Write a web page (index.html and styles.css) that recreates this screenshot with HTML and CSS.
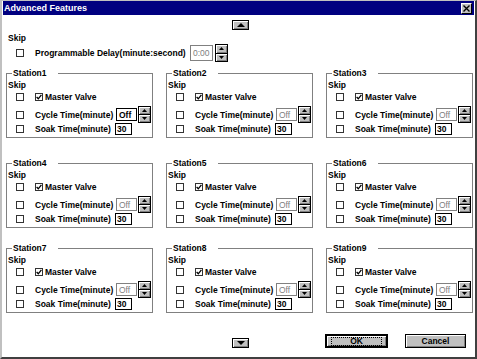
FILE: index.html
```html
<!DOCTYPE html>
<html>
<head>
<meta charset="utf-8">
<title>Advanced Features</title>
<link rel="stylesheet" href="styles.css">
</head>
<body>
<div class="window">
  <div class="titlebar">
    <span class="title">Advanced Features</span>
    <span class="close"><svg width="7" height="7" viewBox="0 0 7 7"><path d="M0.5 0.5L6.5 6.5M6.5 0.5L0.5 6.5" stroke="#000" stroke-width="1.4" fill="none"/></svg></span>
  </div>
  <div class="client">
    <div class="scroll-row">
      <span class="arrow-btn"><svg width="8" height="4" viewBox="0 0 8 4"><path d="M0 4H8L4 0Z" fill="#000"/></svg></span>
    </div>
    <div class="delay">
      <div class="skip">Skip</div>
      <div class="delay-row">
        <span class="cb"></span>
        <span class="delay-label">Programmable Delay(minute:second)</span>
        <span class="field field-delay disabled">0:00</span>
        <span class="spin spin-delay">
          <span class="spin-btn"><svg width="5" height="3" viewBox="0 0 5 3"><path d="M0 3H5L2.5 0Z" fill="#000"/></svg></span>
          <span class="spin-btn"><svg width="5" height="3" viewBox="0 0 5 3"><path d="M0 0H5L2.5 3Z" fill="#000"/></svg></span>
        </span>
      </div>
    </div>

    <div class="stations">
      <div class="station-row first">
        <fieldset class="station">
          <legend>Station1</legend>
          <div class="skip">Skip</div>
          <div class="srow r1"><span class="cb"></span><span class="cb checked"><svg width="6" height="6" viewBox="0 0 6 6"><path d="M0.6 3L2.3 4.8L5.4 0.8" stroke="#000" stroke-width="1.3" fill="none"/></svg></span><span class="mv">Master Valve</span></div>
          <div class="srow r2"><span class="cb"></span><span class="lbl-cycle">Cycle Time(minute)</span><span class="field field-off">Off</span><span class="spin"><span class="spin-btn"><svg width="5" height="3" viewBox="0 0 5 3"><path d="M0 3H5L2.5 0Z" fill="#000"/></svg></span><span class="spin-btn"><svg width="5" height="3" viewBox="0 0 5 3"><path d="M0 0H5L2.5 3Z" fill="#000"/></svg></span></span></div>
          <div class="srow r3"><span class="cb"></span><span class="lbl-soak">Soak Time(minute)</span><span class="field field-soak">30</span></div>
        </fieldset>
        <fieldset class="station">
          <legend>Station2</legend>
          <div class="skip">Skip</div>
          <div class="srow r1"><span class="cb"></span><span class="cb checked"><svg width="6" height="6" viewBox="0 0 6 6"><path d="M0.6 3L2.3 4.8L5.4 0.8" stroke="#000" stroke-width="1.3" fill="none"/></svg></span><span class="mv">Master Valve</span></div>
          <div class="srow r2"><span class="cb"></span><span class="lbl-cycle">Cycle Time(minute)</span><span class="field field-off disabled">Off</span><span class="spin"><span class="spin-btn"><svg width="5" height="3" viewBox="0 0 5 3"><path d="M0 3H5L2.5 0Z" fill="#000"/></svg></span><span class="spin-btn"><svg width="5" height="3" viewBox="0 0 5 3"><path d="M0 0H5L2.5 3Z" fill="#000"/></svg></span></span></div>
          <div class="srow r3"><span class="cb"></span><span class="lbl-soak">Soak Time(minute)</span><span class="field field-soak">30</span></div>
        </fieldset>
        <fieldset class="station">
          <legend>Station3</legend>
          <div class="skip">Skip</div>
          <div class="srow r1"><span class="cb"></span><span class="cb checked"><svg width="6" height="6" viewBox="0 0 6 6"><path d="M0.6 3L2.3 4.8L5.4 0.8" stroke="#000" stroke-width="1.3" fill="none"/></svg></span><span class="mv">Master Valve</span></div>
          <div class="srow r2"><span class="cb"></span><span class="lbl-cycle">Cycle Time(minute)</span><span class="field field-off disabled">Off</span><span class="spin"><span class="spin-btn"><svg width="5" height="3" viewBox="0 0 5 3"><path d="M0 3H5L2.5 0Z" fill="#000"/></svg></span><span class="spin-btn"><svg width="5" height="3" viewBox="0 0 5 3"><path d="M0 0H5L2.5 3Z" fill="#000"/></svg></span></span></div>
          <div class="srow r3"><span class="cb"></span><span class="lbl-soak">Soak Time(minute)</span><span class="field field-soak">30</span></div>
        </fieldset>
      </div>

      <div class="station-row second">
        <fieldset class="station">
          <legend>Station4</legend>
          <div class="skip">Skip</div>
          <div class="srow r1"><span class="cb"></span><span class="cb checked"><svg width="6" height="6" viewBox="0 0 6 6"><path d="M0.6 3L2.3 4.8L5.4 0.8" stroke="#000" stroke-width="1.3" fill="none"/></svg></span><span class="mv">Master Valve</span></div>
          <div class="srow r2"><span class="cb"></span><span class="lbl-cycle">Cycle Time(minute)</span><span class="field field-off disabled">Off</span><span class="spin"><span class="spin-btn"><svg width="5" height="3" viewBox="0 0 5 3"><path d="M0 3H5L2.5 0Z" fill="#000"/></svg></span><span class="spin-btn"><svg width="5" height="3" viewBox="0 0 5 3"><path d="M0 0H5L2.5 3Z" fill="#000"/></svg></span></span></div>
          <div class="srow r3"><span class="cb"></span><span class="lbl-soak">Soak Time(minute)</span><span class="field field-soak">30</span></div>
        </fieldset>
        <fieldset class="station">
          <legend>Station5</legend>
          <div class="skip">Skip</div>
          <div class="srow r1"><span class="cb"></span><span class="cb checked"><svg width="6" height="6" viewBox="0 0 6 6"><path d="M0.6 3L2.3 4.8L5.4 0.8" stroke="#000" stroke-width="1.3" fill="none"/></svg></span><span class="mv">Master Valve</span></div>
          <div class="srow r2"><span class="cb"></span><span class="lbl-cycle">Cycle Time(minute)</span><span class="field field-off disabled">Off</span><span class="spin"><span class="spin-btn"><svg width="5" height="3" viewBox="0 0 5 3"><path d="M0 3H5L2.5 0Z" fill="#000"/></svg></span><span class="spin-btn"><svg width="5" height="3" viewBox="0 0 5 3"><path d="M0 0H5L2.5 3Z" fill="#000"/></svg></span></span></div>
          <div class="srow r3"><span class="cb"></span><span class="lbl-soak">Soak Time(minute)</span><span class="field field-soak">30</span></div>
        </fieldset>
        <fieldset class="station">
          <legend>Station6</legend>
          <div class="skip">Skip</div>
          <div class="srow r1"><span class="cb"></span><span class="cb checked"><svg width="6" height="6" viewBox="0 0 6 6"><path d="M0.6 3L2.3 4.8L5.4 0.8" stroke="#000" stroke-width="1.3" fill="none"/></svg></span><span class="mv">Master Valve</span></div>
          <div class="srow r2"><span class="cb"></span><span class="lbl-cycle">Cycle Time(minute)</span><span class="field field-off disabled">Off</span><span class="spin"><span class="spin-btn"><svg width="5" height="3" viewBox="0 0 5 3"><path d="M0 3H5L2.5 0Z" fill="#000"/></svg></span><span class="spin-btn"><svg width="5" height="3" viewBox="0 0 5 3"><path d="M0 0H5L2.5 3Z" fill="#000"/></svg></span></span></div>
          <div class="srow r3"><span class="cb"></span><span class="lbl-soak">Soak Time(minute)</span><span class="field field-soak">30</span></div>
        </fieldset>
      </div>

      <div class="station-row third">
        <fieldset class="station">
          <legend>Station7</legend>
          <div class="skip">Skip</div>
          <div class="srow r1"><span class="cb"></span><span class="cb checked"><svg width="6" height="6" viewBox="0 0 6 6"><path d="M0.6 3L2.3 4.8L5.4 0.8" stroke="#000" stroke-width="1.3" fill="none"/></svg></span><span class="mv">Master Valve</span></div>
          <div class="srow r2"><span class="cb"></span><span class="lbl-cycle">Cycle Time(minute)</span><span class="field field-off disabled">Off</span><span class="spin"><span class="spin-btn"><svg width="5" height="3" viewBox="0 0 5 3"><path d="M0 3H5L2.5 0Z" fill="#000"/></svg></span><span class="spin-btn"><svg width="5" height="3" viewBox="0 0 5 3"><path d="M0 0H5L2.5 3Z" fill="#000"/></svg></span></span></div>
          <div class="srow r3"><span class="cb"></span><span class="lbl-soak">Soak Time(minute)</span><span class="field field-soak">30</span></div>
        </fieldset>
        <fieldset class="station">
          <legend>Station8</legend>
          <div class="skip">Skip</div>
          <div class="srow r1"><span class="cb"></span><span class="cb checked"><svg width="6" height="6" viewBox="0 0 6 6"><path d="M0.6 3L2.3 4.8L5.4 0.8" stroke="#000" stroke-width="1.3" fill="none"/></svg></span><span class="mv">Master Valve</span></div>
          <div class="srow r2"><span class="cb"></span><span class="lbl-cycle">Cycle Time(minute)</span><span class="field field-off disabled">Off</span><span class="spin"><span class="spin-btn"><svg width="5" height="3" viewBox="0 0 5 3"><path d="M0 3H5L2.5 0Z" fill="#000"/></svg></span><span class="spin-btn"><svg width="5" height="3" viewBox="0 0 5 3"><path d="M0 0H5L2.5 3Z" fill="#000"/></svg></span></span></div>
          <div class="srow r3"><span class="cb"></span><span class="lbl-soak">Soak Time(minute)</span><span class="field field-soak">30</span></div>
        </fieldset>
        <fieldset class="station">
          <legend>Station9</legend>
          <div class="skip">Skip</div>
          <div class="srow r1"><span class="cb"></span><span class="cb checked"><svg width="6" height="6" viewBox="0 0 6 6"><path d="M0.6 3L2.3 4.8L5.4 0.8" stroke="#000" stroke-width="1.3" fill="none"/></svg></span><span class="mv">Master Valve</span></div>
          <div class="srow r2"><span class="cb"></span><span class="lbl-cycle">Cycle Time(minute)</span><span class="field field-off disabled">Off</span><span class="spin"><span class="spin-btn"><svg width="5" height="3" viewBox="0 0 5 3"><path d="M0 3H5L2.5 0Z" fill="#000"/></svg></span><span class="spin-btn"><svg width="5" height="3" viewBox="0 0 5 3"><path d="M0 0H5L2.5 3Z" fill="#000"/></svg></span></span></div>
          <div class="srow r3"><span class="cb"></span><span class="lbl-soak">Soak Time(minute)</span><span class="field field-soak">30</span></div>
        </fieldset>
      </div>
    </div>

    <div class="footer">
      <span class="footer-spacer"></span>
      <span class="arrow-btn"><svg width="8" height="4" viewBox="0 0 8 4"><path d="M0 0H8L4 4Z" fill="#000"/></svg></span>
      <span class="buttons">
        <span class="btn btn-default"><span class="focus">OK</span></span>
        <span class="btn">Cancel</span>
      </span>
    </div>
  </div>
</div>
</body>
</html>
```

FILE: styles.css
```css
* { box-sizing: border-box; }
html, body { margin: 0; padding: 0; }
body {
  width: 477px;
  height: 359px;
  overflow: hidden;
  background: #fff;
  font-family: "Liberation Sans", Arial, sans-serif;
  font-size: 8.5px;
  font-weight: bold;
  color: #000;
}
.window {
  width: 477px;
  height: 359px;
  border-style: solid;
  border-width: 1px 2px 2px 2px;
  border-color: #c0c0c0 #404040 #404040 #c0c0c0;
  display: flex;
  flex-direction: column;
  background: #fff;
}
.titlebar {
  height: 14px;
  margin: 0 1px;
  background: #000080;
  color: #fff;
  display: flex;
  align-items: center;
  justify-content: space-between;
  padding: 0 2px 0 1px;
}
.title { line-height: 14px; font-size: 9px; }
.close {
  width: 11px;
  height: 11px;
  background: #c0c0c0;
  border: 1px solid;
  border-color: #fff #000 #000 #fff;
  display: flex;
  align-items: center;
  justify-content: center;
}
.close svg { display: block; }
.client {
  flex: 1;
  display: flex;
  flex-direction: column;
  padding: 5px 0 0 4px;
}
.scroll-row { display: flex; justify-content: center; }
.arrow-btn {
  width: 17px;
  height: 10px;
  background: #c0c0c0;
  border: 1px solid #000;
  box-shadow: inset 1px 1px #fff, inset -1px -1px #808080;
  display: flex;
  align-items: center;
  justify-content: center;
}
.arrow-btn svg, .spin-btn svg, .cb svg { display: block; }

.delay { padding-left: 2px; }
.skip { line-height: 9px; }
.delay .skip { margin-top: 4px; }
.delay-row {
  display: flex;
  align-items: center;
  height: 18px;
  padding-left: 8px;
  margin-top: 1px;
}
.cb {
  width: 8px;
  height: 8px;
  border: 1px solid #333;
  background: #fff;
  flex: none;
  display: flex;
  align-items: center;
  justify-content: center;
}
.delay-label { margin-left: 11px; width: 155px; white-space: nowrap; }
.field {
  background: #fff;
  border: 1px solid #000;
  padding-left: 2px;
  white-space: nowrap;
  display: flex;
  align-items: center;
  flex: none;
}
.field.disabled { border-color: #808080; color: #808080; font-weight: normal; }
.field-delay { width: 23px; height: 16px; }
.spin {
  width: 13px;
  height: 17px;
  display: flex;
  flex-direction: column;
  background: #c0c0c0;
  border: 1px solid #000;
  flex: none;
}
.spin-delay { margin-left: 2px; height: 18px; }
.spin-btn {
  flex: 1;
  display: flex;
  align-items: center;
  justify-content: center;
  box-shadow: inset 1px 1px #fff, inset -1px -1px #808080;
}
.spin-btn + .spin-btn { border-top: 1px solid #000; }

.stations { display: flex; flex-direction: column; }
.station-row { display: flex; gap: 13px; }
.station-row.first { margin-top: 6px; }
.station-row.second { margin-top: 20px; }
.station-row.third { margin-top: 15px; }
.station {
  width: 147px;
  margin: 0;
  padding: 1px 1px 3px 1px;
  border: 1px solid #808080;
  min-width: 0;
}
.station legend {
  padding: 0 11px 0 1px;
  margin-left: 4px;
  line-height: 11px;
}
.station .skip { line-height: 10px; }
.srow {
  display: flex;
  align-items: center;
  padding-left: 8px;
}
.srow .cb + span { margin-left: 11px; }
.srow .cb.checked + .mv { margin-left: 2px; }
.r1 { height: 13px; margin-bottom: 3px; }
.r2 { height: 17px; }
.r3 { height: 11px; }
.mv { white-space: nowrap; }
.lbl-cycle { width: 81px; white-space: nowrap; }
.lbl-soak { width: 80px; white-space: nowrap; }
.field-off { width: 21px; height: 13px; }
.field-off + .spin { margin-left: 1px; }
.field-soak { width: 17px; height: 12px; padding-left: 1px; }

.footer {
  margin-top: auto;
  padding-bottom: 9px;
  display: grid;
  grid-template-columns: 1fr auto 1fr;
  align-items: end;
}
.buttons {
  display: flex;
  justify-content: flex-end;
  gap: 17px;
  padding-right: 9px;
}
.btn {
  height: 14px;
  width: 61px;
  background: #c0c0c0;
  border: 1px solid #000;
  box-shadow: inset 1px 1px #fff, inset -1px -1px #808080;
  display: flex;
  align-items: center;
  justify-content: center;
  line-height: 10px;
}
.btn-default {
  width: 63px;
  border-width: 2px;
}
.focus {
  width: 51px;
  height: 9px;
  border: 1px dotted #000;
  display: flex;
  align-items: center;
  justify-content: center;
}
```
